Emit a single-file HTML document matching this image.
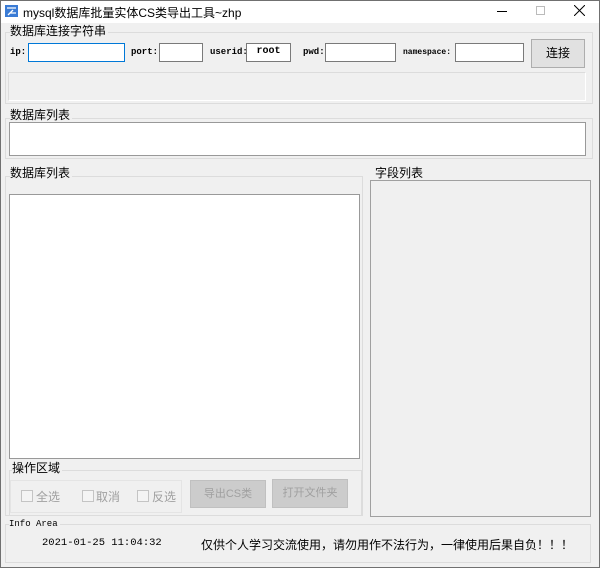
<!DOCTYPE html>
<html><head><meta charset="utf-8"><style>
*{margin:0;padding:0;box-sizing:border-box}
html,body{width:600px;height:568px;overflow:hidden}
body{background:#f0f0f0;position:relative;font-family:"Liberation Sans","Noto Sans CJK SC",sans-serif;font-size:12px;color:#000}
.a{position:absolute;white-space:nowrap}
.grp{position:absolute;border:1px solid #dcdcdc}
.lbl{position:absolute;background:#f0f0f0;font-size:12px;line-height:14px;padding-right:2px;white-space:nowrap}
.mono{font-family:"Liberation Mono","DejaVu Sans Mono",monospace;font-size:9px;font-weight:bold}
.inp{position:absolute;background:#fff;border:1px solid #7a7a7a}
.btn{position:absolute;background:#cccccc;border:1px solid #c0c0c0;color:#a0a0a0;text-align:center;font-size:11px;white-space:nowrap}
.cb{position:absolute;width:12px;height:12px;border:1px solid #c4c4c4;background:#f4f4f4}
.ct{position:absolute;color:#a0a0a0;font-size:12px;white-space:nowrap}
</style></head><body>
<div class="a" style="left:0;top:0;width:600px;height:23px;background:#fff"></div>
<svg class="a" style="left:5px;top:5px" width="13" height="12"><rect width="13" height="12" fill="#3a7bd5"/><path d="M2 3h9M8 5L3 10M5 8h6" stroke="#fff" stroke-width="1.3" fill="none"/></svg>
<div class="a" style="left:23px;top:4px;font-size:12px">mysql数据库批量实体CS类导出工具~zhp</div>
<div class="a" style="left:497px;top:11px;width:10px;height:1px;background:#000"></div>
<div class="a" style="left:536px;top:6px;width:9px;height:9px;border:1px solid #bbb"></div>
<svg class="a" style="left:574px;top:5px" width="11" height="11"><path d="M0 0L11 11M11 0L0 11" stroke="#000" stroke-width="1"/></svg>

<div class="grp" style="left:5px;top:32px;width:588px;height:72px"></div>
<div class="lbl" style="left:10px;top:24px">数据库连接字符串</div>
<div class="a mono" style="left:10px;top:47px">ip:</div>
<div class="inp" style="left:28px;top:43px;width:97px;height:19px;border-color:#0078d7"></div>
<div class="a mono" style="left:131px;top:47px">port:</div>
<div class="inp" style="left:159px;top:43px;width:44px;height:19px"></div>
<div class="a mono" style="left:210px;top:47px">userid:</div>
<div class="inp mono" style="left:246px;top:43px;width:45px;height:19px;text-align:center;line-height:16px;font-size:10px">root</div>
<div class="a mono" style="left:303px;top:47px">pwd:</div>
<div class="inp" style="left:325px;top:43px;width:71px;height:19px"></div>
<div class="a mono" style="left:403px;top:48px;font-size:8px">namespace:</div>
<div class="inp" style="left:455px;top:43px;width:69px;height:19px"></div>
<div class="a" style="left:531px;top:39px;width:54px;height:29px;background:#e1e1e1;border:1px solid #adadad;text-align:center;line-height:27px">连接</div>
<div class="a" style="left:8px;top:72px;width:578px;height:29px;border:1px solid #dcdcdc;border-right-color:#fff;border-bottom-color:#fff"></div>

<div class="grp" style="left:5px;top:118px;width:588px;height:41px"></div>
<div class="lbl" style="left:10px;top:108px">数据库列表</div>
<div class="inp" style="left:9px;top:122px;width:577px;height:34px;border-color:#999"></div>

<div class="grp" style="left:5px;top:176px;width:358px;height:340px"></div>
<div class="lbl" style="left:10px;top:166px">数据库列表</div>
<div class="inp" style="left:9px;top:194px;width:351px;height:265px;border-color:#999"></div>

<div class="grp" style="left:9px;top:470px;width:353px;height:46px"></div>
<div class="lbl" style="left:12px;top:461px">操作区域</div>
<div class="a" style="left:10px;top:480px;width:172px;height:33px;border:1px solid #e4e4e4"></div>
<div class="cb" style="left:21px;top:490px"></div><div class="ct" style="left:36px;top:488px">全选</div>
<div class="cb" style="left:82px;top:490px"></div><div class="ct" style="left:96px;top:488px">取消</div>
<div class="cb" style="left:137px;top:490px"></div><div class="ct" style="left:152px;top:488px">反选</div>
<div class="btn" style="left:190px;top:480px;width:76px;height:28px;line-height:26px">导出CS类</div>
<div class="btn" style="left:272px;top:479px;width:76px;height:29px;line-height:27px">打开文件夹</div>

<div class="lbl" style="left:375px;top:166px">字段列表</div>
<div class="a" style="left:370px;top:180px;width:221px;height:337px;border:1px solid #a0a0a0;background:#f0f0f0"></div>

<div class="grp" style="left:5px;top:524px;width:586px;height:39px"></div>
<div class="lbl mono" style="left:9px;top:517px;font-weight:normal;font-size:9px">Info Area</div>
<div class="a" style="left:42px;top:537px;font-family:'Liberation Mono',monospace;font-size:10.5px">2021-01-25 11:04:32</div>
<div class="a" style="left:201px;top:536px;font-size:12px">仅供个人学习交流使用，请勿用作不法行为，一律使用后果自负！！！</div>
<div class="a" style="left:0;top:0;width:600px;height:568px;border:1px solid #707070"></div>
</body></html>
